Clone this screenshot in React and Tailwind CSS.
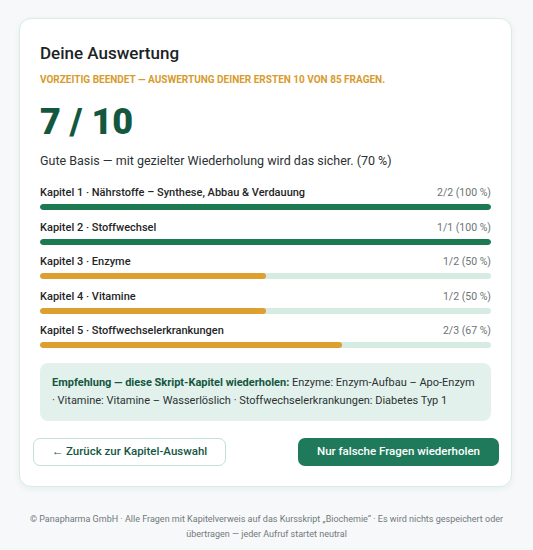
import React from "react";

const rows = [
  { label: "Kapitel 1 · Nährstoffe – Synthese, Abbau & Verdauung", score: "2/2 (100 %)", pct: 100 },
  { label: "Kapitel 2 · Stoffwechsel", score: "1/1 (100 %)", pct: 100 },
  { label: "Kapitel 3 · Enzyme", score: "1/2 (50 %)", pct: 50 },
  { label: "Kapitel 4 · Vitamine", score: "1/2 (50 %)", pct: 50 },
  { label: "Kapitel 5 · Stoffwechselerkrankungen", score: "2/3 (67 %)", pct: 67 },
];

export default function App() {
  return (
    <div
      className="min-h-screen bg-[#f6f8f9] pt-[18px] pb-4 px-[19px]"
      style={{ fontFamily: 'Roboto, "Noto Sans", sans-serif' }}
    >
      <div className="w-[493px] rounded-[12px] border border-[#d9ece5] bg-white px-5 pt-[22px] pb-[20px] shadow-[0_2px_6px_rgba(20,87,63,0.06)]">
        <h1 className="text-[17px] leading-[24px] font-medium text-[#1c2325]">Deine Auswertung</h1>
        <div className="mt-[8px] text-[10px] leading-[14px] font-bold uppercase text-[#d79b2e]">
          Vorzeitig beendet — Auswertung deiner ersten 10 von 85 Fragen.
        </div>
        <div className="mt-[15px] text-[36px] leading-[40px] font-black text-[#14573f]">7 / 10</div>
        <p className="mt-[9px] text-[12.5px] leading-[20px] text-[#2b3133]">
          Gute Basis — mit gezielter Wiederholung wird das sicher. (70 %)
        </p>
        <div className="mt-[14px] flex flex-col gap-[9.5px]">
          {rows.map((r) => (
            <div key={r.label}>
              <div className="flex items-center justify-between leading-[16px]">
                <span className="text-[11px] font-medium text-[#1f2628]">{r.label}</span>
                <span className="text-[10.5px] text-[#6b7375]">{r.score}</span>
              </div>
              <div className="mt-[3px] h-[6px] w-full rounded-full bg-[#d6ece3] overflow-hidden">
                <div
                  className={r.pct === 100 ? "h-full rounded-full bg-[#1b7a52]" : "h-full rounded-full bg-[#dc9f30]"}
                  style={{ width: `${r.pct}%` }}
                />
              </div>
            </div>
          ))}
        </div>
        <div className="mt-[15px] rounded-[8px] bg-[#e3f1ec] px-3 py-[11px] text-[11px] leading-[18px] text-[#2b3133]">
          <div className="whitespace-nowrap">
            <span className="font-bold text-[#14573f]">Empfehlung — diese Skript-Kapitel wiederholen:</span> Enzyme: Enzym-Aufbau – Apo-Enzym
          </div>
          <div>· Vitamine: Vitamine – Wasserlöslich · Stoffwechselerkrankungen: Diabetes Typ 1</div>
        </div>
        <div className="mt-[17px] -ml-[7px] -mr-[8px] flex items-center justify-between">
          <button className="h-[28px] w-[193px] rounded-[7px] border border-[#c2e0d5] bg-white text-[11.5px] font-medium text-[#14573f]">
            ← Zurück zur Kapitel-Auswahl
          </button>
          <button className="h-[28px] w-[201px] rounded-[7px] bg-[#1e7a5a] text-[11.5px] font-medium text-white">
            Nur falsche Fragen wiederholen
          </button>
        </div>
      </div>
      <p className="mt-[25px] text-center text-[9px] leading-[15px] text-[#71797b]">
        © Panapharma GmbH · Alle Fragen mit Kapitelverweis auf das Kursskript „Biochemie“ · Es wird nichts gespeichert oder übertragen — jeder Aufruf startet neutral
      </p>
    </div>
  );
}
